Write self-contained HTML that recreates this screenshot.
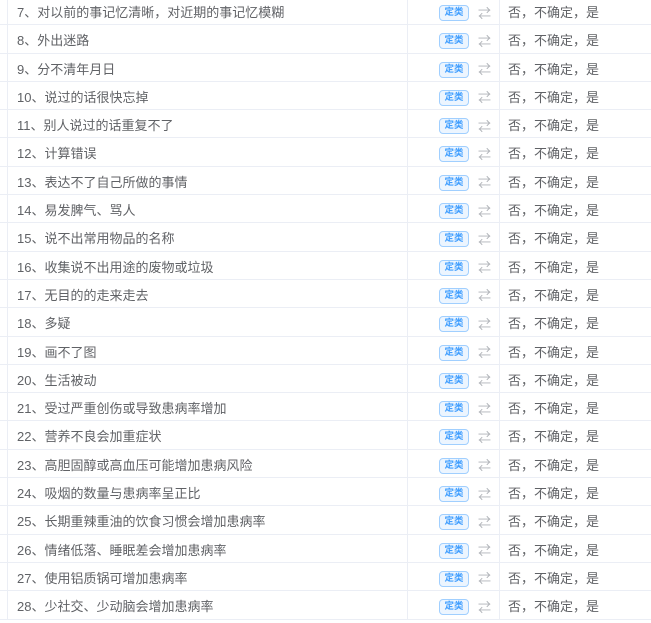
<!DOCTYPE html>
<html><head><meta charset="utf-8"><style>
*{margin:0;padding:0;box-sizing:border-box}
body{width:651px;height:623px;overflow:hidden;background:#fff;font-family:"Liberation Sans","Noto Sans CJK SC",sans-serif;color:#606266;font-size:13px}
.wrap{position:absolute;top:-3px;left:0;width:651px}
.r{height:28.3px;border-bottom:1px solid #ebeef5;position:relative}
.r:before{content:"";position:absolute;left:7px;top:0;bottom:-1px;border-left:1px solid #ebeef5}
.c1{position:absolute;left:17px;top:2px;line-height:28px}
.c2{position:absolute;left:407px;top:0;bottom:-1px;border-left:1px solid #ebeef5}
.c3{position:absolute;left:499px;top:0;bottom:-1px;border-left:1px solid #ebeef5}
.tag{position:absolute;left:439px;top:8px;width:30px;height:16px;border:1px solid #a0cfff;background:#ecf5ff;color:#409eff;border-radius:4px;font-size:9.5px;font-weight:bold;line-height:14px;text-align:center}
.ar{position:absolute;left:478px;top:2.5px;line-height:28px;color:#b0b3b8;font-size:13px}
.c4{position:absolute;left:508px;top:2px;line-height:28px}
</style></head><body><div class="wrap">
<div class="r"><span class="c1">7、对以前的事记忆清晰，对近期的事记忆模糊</span><i class="c2"></i><span class="tag">定类</span><span class="ar">⇄</span><i class="c3"></i><span class="c4">否，不确定，是</span></div>
<div class="r"><span class="c1">8、外出迷路</span><i class="c2"></i><span class="tag">定类</span><span class="ar">⇄</span><i class="c3"></i><span class="c4">否，不确定，是</span></div>
<div class="r"><span class="c1">9、分不清年月日</span><i class="c2"></i><span class="tag">定类</span><span class="ar">⇄</span><i class="c3"></i><span class="c4">否，不确定，是</span></div>
<div class="r"><span class="c1">10、说过的话很快忘掉</span><i class="c2"></i><span class="tag">定类</span><span class="ar">⇄</span><i class="c3"></i><span class="c4">否，不确定，是</span></div>
<div class="r"><span class="c1">11、别人说过的话重复不了</span><i class="c2"></i><span class="tag">定类</span><span class="ar">⇄</span><i class="c3"></i><span class="c4">否，不确定，是</span></div>
<div class="r"><span class="c1">12、计算错误</span><i class="c2"></i><span class="tag">定类</span><span class="ar">⇄</span><i class="c3"></i><span class="c4">否，不确定，是</span></div>
<div class="r"><span class="c1">13、表达不了自己所做的事情</span><i class="c2"></i><span class="tag">定类</span><span class="ar">⇄</span><i class="c3"></i><span class="c4">否，不确定，是</span></div>
<div class="r"><span class="c1">14、易发脾气、骂人</span><i class="c2"></i><span class="tag">定类</span><span class="ar">⇄</span><i class="c3"></i><span class="c4">否，不确定，是</span></div>
<div class="r"><span class="c1">15、说不出常用物品的名称</span><i class="c2"></i><span class="tag">定类</span><span class="ar">⇄</span><i class="c3"></i><span class="c4">否，不确定，是</span></div>
<div class="r"><span class="c1">16、收集说不出用途的废物或垃圾</span><i class="c2"></i><span class="tag">定类</span><span class="ar">⇄</span><i class="c3"></i><span class="c4">否，不确定，是</span></div>
<div class="r"><span class="c1">17、无目的的走来走去</span><i class="c2"></i><span class="tag">定类</span><span class="ar">⇄</span><i class="c3"></i><span class="c4">否，不确定，是</span></div>
<div class="r"><span class="c1">18、多疑</span><i class="c2"></i><span class="tag">定类</span><span class="ar">⇄</span><i class="c3"></i><span class="c4">否，不确定，是</span></div>
<div class="r"><span class="c1">19、画不了图</span><i class="c2"></i><span class="tag">定类</span><span class="ar">⇄</span><i class="c3"></i><span class="c4">否，不确定，是</span></div>
<div class="r"><span class="c1">20、生活被动</span><i class="c2"></i><span class="tag">定类</span><span class="ar">⇄</span><i class="c3"></i><span class="c4">否，不确定，是</span></div>
<div class="r"><span class="c1">21、受过严重创伤或导致患病率增加</span><i class="c2"></i><span class="tag">定类</span><span class="ar">⇄</span><i class="c3"></i><span class="c4">否，不确定，是</span></div>
<div class="r"><span class="c1">22、营养不良会加重症状</span><i class="c2"></i><span class="tag">定类</span><span class="ar">⇄</span><i class="c3"></i><span class="c4">否，不确定，是</span></div>
<div class="r"><span class="c1">23、高胆固醇或高血压可能增加患病风险</span><i class="c2"></i><span class="tag">定类</span><span class="ar">⇄</span><i class="c3"></i><span class="c4">否，不确定，是</span></div>
<div class="r"><span class="c1">24、吸烟的数量与患病率呈正比</span><i class="c2"></i><span class="tag">定类</span><span class="ar">⇄</span><i class="c3"></i><span class="c4">否，不确定，是</span></div>
<div class="r"><span class="c1">25、长期重辣重油的饮食习惯会增加患病率</span><i class="c2"></i><span class="tag">定类</span><span class="ar">⇄</span><i class="c3"></i><span class="c4">否，不确定，是</span></div>
<div class="r"><span class="c1">26、情绪低落、睡眠差会增加患病率</span><i class="c2"></i><span class="tag">定类</span><span class="ar">⇄</span><i class="c3"></i><span class="c4">否，不确定，是</span></div>
<div class="r"><span class="c1">27、使用铝质锅可增加患病率</span><i class="c2"></i><span class="tag">定类</span><span class="ar">⇄</span><i class="c3"></i><span class="c4">否，不确定，是</span></div>
<div class="r"><span class="c1">28、少社交、少动脑会增加患病率</span><i class="c2"></i><span class="tag">定类</span><span class="ar">⇄</span><i class="c3"></i><span class="c4">否，不确定，是</span></div>
</div></body></html>
